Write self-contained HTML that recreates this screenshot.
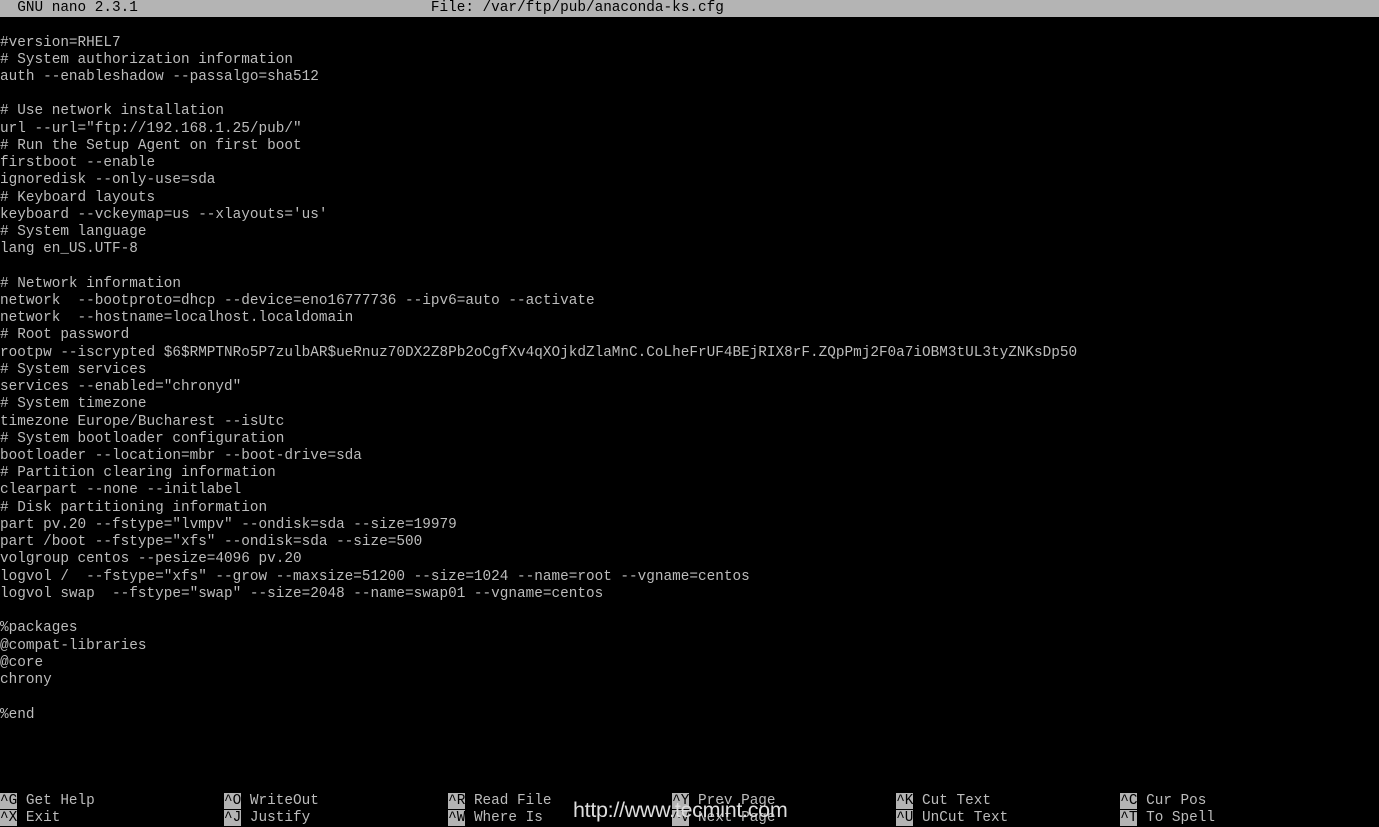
<!DOCTYPE html>
<html><head><meta charset="utf-8"><style>
html,body{margin:0;padding:0;background:#000;width:1379px;height:827px;overflow:hidden}
.r{position:absolute;left:0;height:17.23px;line-height:17.23px;font-family:"Liberation Mono",monospace;font-size:14.37px;color:#bcbcbc;white-space:pre}
.bar{position:absolute;left:0;top:0;width:1379px;height:17px;background:#b4b4b4}
.bar .r{color:#000}
.k{background:#b4b4b4;color:#000}
.wm{position:absolute;left:573px;top:798px;font-family:"Liberation Sans",sans-serif;font-size:21.5px;color:#ddd;letter-spacing:-0.3px}
</style></head><body>
<div class="bar"><div class="r" style="top:0">  GNU nano 2.3.1                                  File: /var/ftp/pub/anaconda-ks.cfg</div></div>
<div class="r" style="top:34.5px">#version=RHEL7</div>
<div class="r" style="top:51.7px"># System authorization information</div>
<div class="r" style="top:68.9px">auth --enableshadow --passalgo=sha512</div>
<div class="r" style="top:103.4px"># Use network installation</div>
<div class="r" style="top:120.6px">url --url="ftp://192.168.1.25/pub/"</div>
<div class="r" style="top:137.8px"># Run the Setup Agent on first boot</div>
<div class="r" style="top:155.1px">firstboot --enable</div>
<div class="r" style="top:172.3px">ignoredisk --only-use=sda</div>
<div class="r" style="top:189.5px"># Keyboard layouts</div>
<div class="r" style="top:206.8px">keyboard --vckeymap=us --xlayouts='us'</div>
<div class="r" style="top:224px"># System language</div>
<div class="r" style="top:241.2px">lang en_US.UTF-8</div>
<div class="r" style="top:275.7px"># Network information</div>
<div class="r" style="top:292.9px">network  --bootproto=dhcp --device=eno16777736 --ipv6=auto --activate</div>
<div class="r" style="top:310.2px">network  --hostname=localhost.localdomain</div>
<div class="r" style="top:327.4px"># Root password</div>
<div class="r" style="top:344.6px">rootpw --iscrypted $6$RMPTNRo5P7zulbAR$ueRnuz70DX2Z8Pb2oCgfXv4qXOjkdZlaMnC.CoLheFrUF4BEjRIX8rF.ZQpPmj2F0a7iOBM3tUL3tyZNKsDp50</div>
<div class="r" style="top:361.8px"># System services</div>
<div class="r" style="top:379.1px">services --enabled="chronyd"</div>
<div class="r" style="top:396.3px"># System timezone</div>
<div class="r" style="top:413.5px">timezone Europe/Bucharest --isUtc</div>
<div class="r" style="top:430.8px"># System bootloader configuration</div>
<div class="r" style="top:448px">bootloader --location=mbr --boot-drive=sda</div>
<div class="r" style="top:465.2px"># Partition clearing information</div>
<div class="r" style="top:482.4px">clearpart --none --initlabel</div>
<div class="r" style="top:499.7px"># Disk partitioning information</div>
<div class="r" style="top:516.9px">part pv.20 --fstype="lvmpv" --ondisk=sda --size=19979</div>
<div class="r" style="top:534.1px">part /boot --fstype="xfs" --ondisk=sda --size=500</div>
<div class="r" style="top:551.4px">volgroup centos --pesize=4096 pv.20</div>
<div class="r" style="top:568.6px">logvol /  --fstype="xfs" --grow --maxsize=51200 --size=1024 --name=root --vgname=centos</div>
<div class="r" style="top:585.8px">logvol swap  --fstype="swap" --size=2048 --name=swap01 --vgname=centos</div>
<div class="r" style="top:620.3px">%packages</div>
<div class="r" style="top:637.5px">@compat-libraries</div>
<div class="r" style="top:654.8px">@core</div>
<div class="r" style="top:672px">chrony</div>
<div class="r" style="top:706.5px">%end</div>
<div class="r" style="top:792.6px"><span class="k">^G</span> Get Help               <span class="k">^O</span> WriteOut               <span class="k">^R</span> Read File              <span class="k">^Y</span> Prev Page              <span class="k">^K</span> Cut Text               <span class="k">^C</span> Cur Pos</div>
<div class="r" style="top:809.8px"><span class="k">^X</span> Exit                   <span class="k">^J</span> Justify                <span class="k">^W</span> Where Is               <span class="k">^V</span> Next Page              <span class="k">^U</span> UnCut Text             <span class="k">^T</span> To Spell</div>
<div class="wm">http://www.tecmint.com</div>
</body></html>
